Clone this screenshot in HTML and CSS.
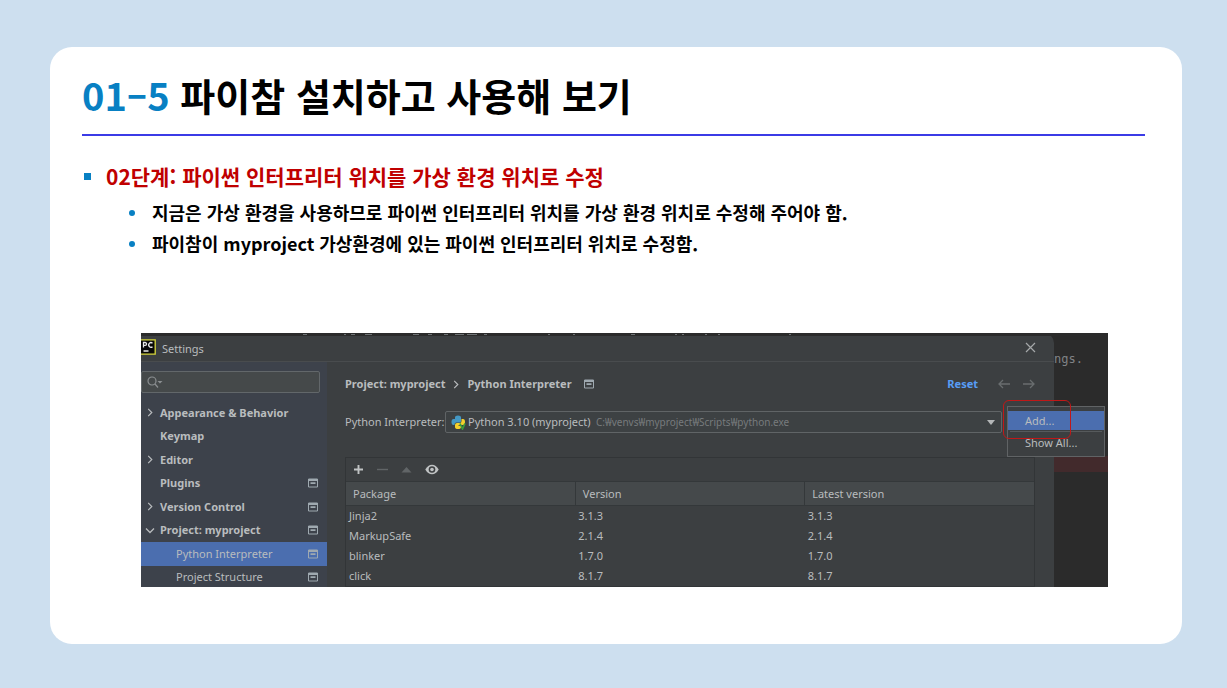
FILE: index.html
```
<!DOCTYPE html>
<html lang="ko">
<head>
<meta charset="utf-8">
<title>01-5 파이참 설치하고 사용해 보기</title>
<link rel="stylesheet" href="styles.css">
</head>
<body>
<svg class="defs" width="0" height="0" aria-hidden="true">
  <symbol id="scope" viewBox="0 0 10 10"><path d="M.5 1h9v8h-9z" fill="none" stroke="currentColor"/><path d="M.5 2h9M2.500 5.200h5" fill="none" stroke="currentColor" stroke-width="1.800"/></symbol>
  <symbol id="right" viewBox="0 0 8 10"><path d="M2 1l4 4-4 4" fill="none" stroke="currentColor" stroke-width="1.300"/></symbol>
  <symbol id="down" viewBox="0 0 10 8"><path d="M1 2l4 4 4-4" fill="none" stroke="currentColor" stroke-width="1.300"/></symbol>
</svg>
<main class="card">
  <h1 class="title"><span class="number">01–5</span> 파이참 설치하고 사용해 보기</h1>
  <section class="notes">
    <h2 class="step">02단계: 파이썬 인터프리터 위치를 가상 환경 위치로 수정</h2>
    <ul class="points">
      <li>지금은 가상 환경을 사용하므로 파이썬 인터프리터 위치를 가상 환경 위치로 수정해 주어야 함.</li>
      <li>파이참이 myproject 가상환경에 있는 파이썬 인터프리터 위치로 수정함.</li>
    </ul>
  </section>

  <section class="ide" aria-label="Settings">
    <div class="dialog">
      <header class="titlebar">
        <svg class="logo" viewBox="0 0 15 16" aria-hidden="true"><path d="M0 .8h14.200v14.400H0" fill="#080808" stroke="#d8d83c" stroke-width="1.300"/><path d="M2.500 8.500V3.500h1.600a1.400 1.400 0 0 1 0 2.900H2.500M11.500 4.200a2.300 2.300 0 1 0 0 3.500M2.500 12h5" fill="none" stroke="#e8e8e8" stroke-width="1.300"/></svg>
        <span class="caption">Settings</span>
        <button class="plain close" aria-label="Close"><svg width="11" height="11" viewBox="0 0 11 11"><path d="M1 1l9 9M10 1l-9 9" stroke="#a5a8a9" stroke-width="1.200"/></svg></button>
      </header>
      <div class="body">
        <nav class="sidebar">
          <label class="search">
            <svg width="17" height="14" viewBox="0 0 17 14" aria-hidden="true"><circle cx="6" cy="6" r="4" fill="none" stroke="#8b8f91" stroke-width="1.200"/><path d="M9 9l3 3.500" stroke="#8b8f91" stroke-width="1.200"/><path d="M11.500 6h5L14 8.500z" fill="#8b8f91"/></svg>
            <input type="text" aria-label="Search settings">
          </label>
          <ul class="tree">
            <li><a href="#"><svg class="arrow"><use href="#right"/></svg><span>Appearance &amp; Behavior</span></a></li>
            <li><a href="#"><i class="arrow"></i><span>Keymap</span></a></li>
            <li><a href="#"><svg class="arrow"><use href="#right"/></svg><span>Editor</span></a></li>
            <li><a href="#"><i class="arrow"></i><span>Plugins</span><svg class="scope"><use href="#scope"/></svg></a></li>
            <li><a href="#"><svg class="arrow"><use href="#right"/></svg><span>Version Control</span><svg class="scope"><use href="#scope"/></svg></a></li>
            <li><a href="#"><svg class="arrow"><use href="#down"/></svg><span>Project: myproject</span><svg class="scope"><use href="#scope"/></svg></a></li>
            <li><a href="#" class="child selected"><span>Python Interpreter</span><svg class="scope"><use href="#scope"/></svg></a></li>
            <li><a href="#" class="child"><span>Project Structure</span><svg class="scope"><use href="#scope"/></svg></a></li>
          </ul>
        </nav>
        <div class="content">
          <div class="crumbs">
            <span>Project: myproject</span>
            <svg class="sep"><use href="#right"/></svg>
            <span>Python Interpreter</span>
            <svg class="scope"><use href="#scope"/></svg>
            <a class="reset" href="#">Reset</a>
            <button class="plain" aria-label="Back"><svg width="12" height="10" viewBox="0 0 12 10"><path d="M12 5H1M5 1L1 5l4 4" fill="none" stroke="#696d6f" stroke-width="1.300"/></svg></button>
            <button class="plain" aria-label="Forward"><svg width="12" height="10" viewBox="0 0 12 10"><path d="M0 5h11M7 1l4 4-4 4" fill="none" stroke="#696d6f" stroke-width="1.300"/></svg></button>
          </div>
          <div class="field">
            <label for="interpreter">Python Interpreter:</label>
            <div class="combo">
              <select id="interpreter"><option>Python 3.10 (myproject)</option></select>
              <div class="overlay">
                <svg width="15" height="15" viewBox="0 0 15 15" aria-hidden="true"><path d="M4 4V2.500Q4 .5 7 .5t3 2V6q0 1.500-1.500 1.500H5Q3.500 7.500 3.500 10H2.500Q.5 10 .5 7t2-3H7" fill="#4498c4"/><path d="M10.500 4h1.500q2 0 2 3t-2 3H7.500v.8H10V12q0 2-3 2t-3-2v-2q0-2 2-2h3q1.500 0 1.500-2z" fill="#f4d02d"/><path d="M9 8.500l2.500 5.500L14 8.500" fill="none" stroke="#3c9b3c" stroke-width="1.700"/></svg>
                <span class="path">C:₩venvs₩myproject₩Scripts₩python.exe</span>
                <svg class="caret" width="8" height="5" viewBox="0 0 8 5" aria-hidden="true"><path d="M0 0h8L4 5z" fill="#b4b7b8"/></svg>
              </div>
            </div>
          </div>
          <div class="packages">
            <div class="tools">
              <button class="plain" aria-label="Add package"><svg width="11" height="11" viewBox="0 0 11 11"><path d="M5.500 1v9M1 5.500h9" stroke="#c0c3c4" stroke-width="1.900"/></svg></button>
              <button class="plain" aria-label="Remove package"><svg width="11" height="11" viewBox="0 0 11 11"><path d="M0 5.500h11" stroke="#616567" stroke-width="1.400"/></svg></button>
              <button class="plain" aria-label="Upgrade package"><svg width="11" height="11" viewBox="0 0 11 11"><path d="M.5 8.500h10L5.500 3z" fill="#616567"/></svg></button>
              <button class="plain" aria-label="Show early releases"><svg width="14" height="11" viewBox="0 0 14 11"><path d="M.3 5.500Q3 .7 7 .7t6.700 4.800Q11 10.300 7 10.300T.3 5.500z" fill="#c0c3c4"/><circle cx="7" cy="5.500" r="3.300" fill="#3c3f41"/><circle cx="7" cy="5.500" r="1.800" fill="#c0c3c4"/></svg></button>
            </div>
            <table>
              <thead><tr><th>Package</th><th>Version</th><th>Latest version</th></tr></thead>
              <tbody>
                <tr><td>Jinja2</td><td>3.1.3</td><td>3.1.3</td></tr>
                <tr><td>MarkupSafe</td><td>2.1.4</td><td>2.1.4</td></tr>
                <tr><td>blinker</td><td>1.7.0</td><td>1.7.0</td></tr>
                <tr><td>click</td><td>8.1.7</td><td>8.1.7</td></tr>
              </tbody>
            </table>
          </div>
        </div>
      </div>
    </div>
    <aside class="editor"><code>ngs.</code><div class="error"></div></aside>
    <svg class="fragments" viewBox="0 0 967 3" aria-hidden="true"><path d="M162 1.500h4M203 1.500h2M210 1.500h4M224 1.500h7M272 1.500h6M287 1.500h4M303 1.500h4M314 1.500h9M326 1.500h10M343 1.500h3M407 1.500h2M432 1.500h2M490 1.500h4M534 1.500h2M541 1.500h2M564 1.500h2M577 1.500h2M648 1.500h2" stroke="#707476" stroke-width="1"/></svg>
    <div class="menu" role="menu">
      <button class="active" role="menuitem">Add...</button>
      <hr>
      <button role="menuitem">Show All...</button>
    </div>
    <div class="highlight"></div>
  </section>
</main>
</body>
</html>
```
FILE: styles.css
```
* { box-sizing: border-box; }

body {
  margin: 0;
  min-height: 100vh;
  padding: 47px 45px 44px 50px;
  display: flex;
  background: #cddfef;
  font-family: "Noto Sans CJK KR", sans-serif;
}

ul { list-style: none; margin: 0; padding: 0; }
a { color: inherit; text-decoration: none; }
.defs { position: absolute; }

.card {
  flex: 1;
  min-width: 0;
  padding: 18px 37px 57px 32px;
  background: #fff;
  border-radius: 22px;
}

.title {
  margin: 0;
  height: 71px;
  border-bottom: 2px solid #3b3be6;
  font-size: 38px;
  line-height: 60px;
  font-weight: 700;
  color: #000;
}
.number { color: #0880c3; }

.notes { padding-top: 24px; }
.step {
  display: flex;
  align-items: center;
  gap: 15px;
  margin: 0;
  padding-left: 2px;
  font-size: 21px;
  line-height: 32px;
  font-weight: 700;
  color: #c00000;
}
.step::before { content: ""; width: 7px; height: 7px; background: #0880c3; }
.points { padding: 5px 0 0 47px; }
.points li {
  display: flex;
  align-items: center;
  gap: 17px;
  font-size: 18px;
  line-height: 31px;
  font-weight: 700;
  color: #000;
}
.points li::before { content: ""; width: 6px; height: 6px; border-radius: 50%; background: #0880c3; }

.ide {
  position: relative;
  display: flex;
  height: 254px;
  margin: 74px 37px 0 59px;
  overflow: hidden;
  background: #2b2b2b;
  color: #b9bcbe;
  font-family: "Noto Sans", "Noto Sans CJK KR", sans-serif;
  font-size: 11px;
  line-height: 18px;
}
.ide button, .ide input, .ide select { font: inherit; color: inherit; }
.ide .plain { display: flex; padding: 0; border: 0; background: none; }

.dialog {
  flex: 1;
  min-width: 0;
  background: #3c3f41;
  border-top-right-radius: 10px;
}
.titlebar {
  display: flex;
  align-items: center;
  gap: 6px;
  height: 29px;
  padding-right: 18px;
  border-bottom: 1px solid #494c4e;
}
.logo { width: 15px; height: 16px; }
.caption { padding-top: 3px; }
.close { margin-left: auto; }
.body { display: flex; }

.sidebar { width: 186px; padding-top: 9px; background: #3d424b; }
.search {
  display: flex;
  align-items: center;
  width: 179px;
  height: 22px;
  padding-left: 4px;
  background: #45494a;
  border: 1px solid #62676a;
  border-radius: 2px;
}
.search input { flex: 1; min-width: 0; border: 0; background: none; outline: 0; }
.tree { display: grid; grid-auto-rows: 1fr; height: 188px; margin-top: 8px; }
.tree a {
  display: flex;
  align-items: center;
  height: 100%;
  padding: 0 9px 0 4px;
  font-weight: 700;
}
.tree .arrow { width: 10px; height: 9px; margin-right: 5px; }
.tree .child { padding-left: 35px; font-weight: 400; }
.tree .selected { background: #4b6eaf; }
.scope { width: 10px; height: 10px; color: #9fa9b0; }
.tree .scope { margin-left: auto; }

.content { flex: 1; min-width: 0; padding: 13px 19px 0 18px; }
.crumbs { display: flex; align-items: center; height: 18px; font-weight: 700; }
.sep { width: 8px; height: 9px; margin: 0 7px; }
.crumbs .scope { margin-left: 12px; }
.reset { margin-left: auto; color: #589df6; }
.crumbs .plain { margin-left: 13px; }
.crumbs .reset + .plain { margin-left: 20px; }

.field { display: flex; align-items: center; height: 22px; margin-top: 18px; margin-right: 33px; }
.field label { width: 100px; white-space: nowrap; }
.combo { position: relative; flex: 1; height: 22px; }
.combo select {
  width: 100%;
  height: 22px;
  padding: 0 22px;
  appearance: none;
  background: #3d4143;
  border: 1px solid #606466;
  border-radius: 2px;
}
.overlay {
  position: absolute;
  inset: 0;
  display: flex;
  align-items: center;
  padding: 0 7px 0 6px;
  pointer-events: none;
}
.path { margin-left: 130px; font-size: 10px; color: #777b7d; }
.caret { margin-left: auto; }

.packages { margin-top: 24px; border: 1px solid #323537; }
.tools { display: flex; align-items: center; gap: 13px; height: 23px; padding-left: 7px; }
table { width: 100%; table-layout: fixed; border-collapse: collapse; }
th {
  height: 24px;
  padding: 0 7px;
  background: #45494b;
  border: solid #34383a;
  border-width: 1px 0 1px 1px;
  font-weight: 400;
  text-align: left;
}
th:first-child { border-left: 0; }
td { height: 20px; padding: 0 3px; }

.editor { display: flex; flex-direction: column; width: 54px; padding-top: 17px; color: #808386; }
.editor code { font: 12px/18px "DejaVu Sans Mono", monospace; }
.error { height: 16px; margin-top: 88px; background: #422a2c; }

.fragments { position: absolute; top: 0; left: 0; width: 100%; height: 3px; background: #2b2b2b; }

.menu {
  position: absolute;
  top: 73px;
  right: 3px;
  width: 98px;
  height: 51px;
  padding-top: 4px;
  background: #3c3f41;
  border: 1px solid #606365;
}
.menu button {
  display: block;
  width: 100%;
  height: 19px;
  padding: 0 17px;
  border: 0;
  background: none;
  line-height: 19px;
  text-align: left;
}
.menu .active { background: #4b6eaf; }
.menu hr { margin: 1px 2px; border: 0; border-top: 1px solid #565a5c; }
.highlight {
  position: absolute;
  top: 67px;
  right: 37px;
  width: 68px;
  height: 39px;
  border: 1px solid #c01818;
  border-radius: 6px;
}
```
